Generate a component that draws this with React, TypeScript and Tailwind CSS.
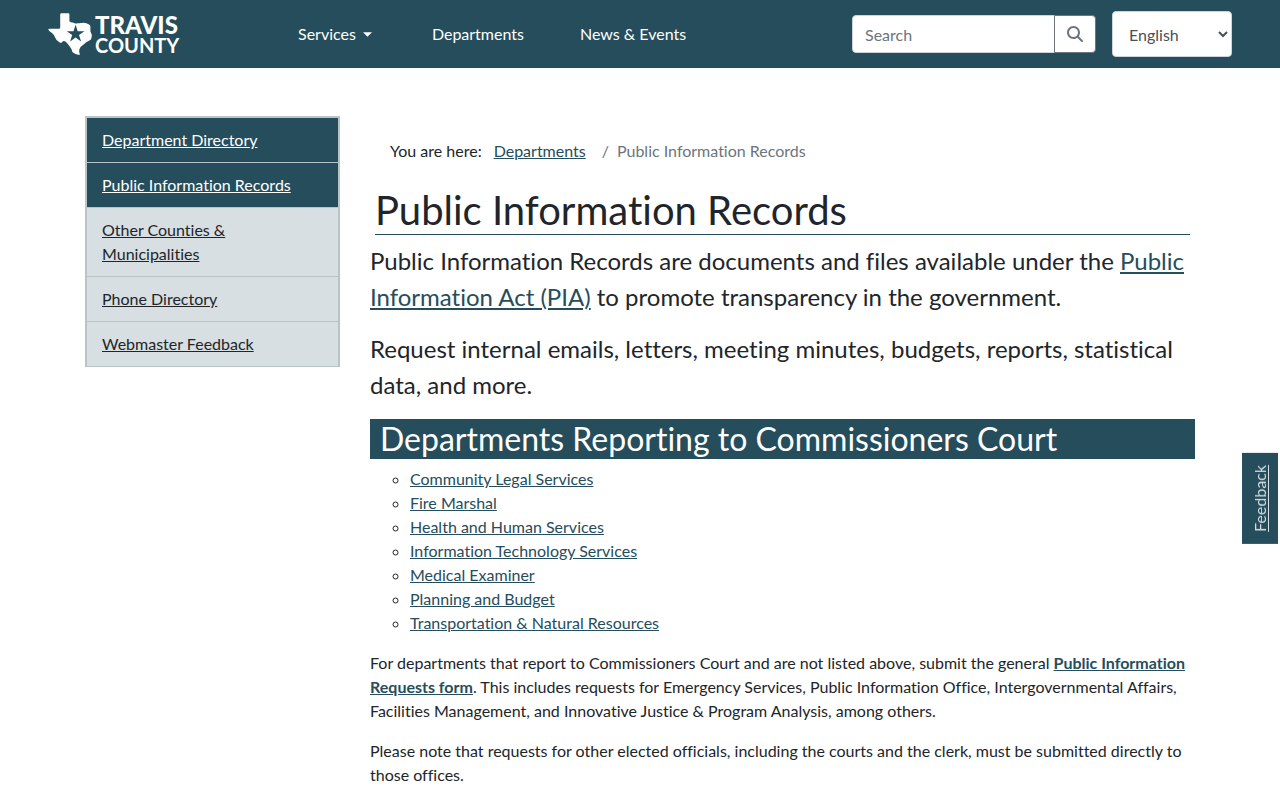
import { useState } from 'react';
import { FaMagnifyingGlass } from 'react-icons/fa6';
import { clsx } from 'clsx';

const sideLinks = [
  { label: 'Department Directory', active: true },
  { label: 'Public Information Records', active: true },
  { label: 'Other Counties & Municipalities', active: false },
  { label: 'Phone Directory', active: false },
  { label: 'Webmaster Feedback', active: false },
];

const departments = [
  'Community Legal Services',
  'Fire Marshal',
  'Health and Human Services',
  'Information Technology Services',
  'Medical Examiner',
  'Planning and Budget',
  'Transportation & Natural Resources',
];

function Logo() {
  return (
    <svg
      width="132"
      height="46"
      viewBox="0 -2 132 46"
      role="img"
      aria-label="Travis County"
      className="overflow-visible"
    >
      <path
        fill="#fff"
        d="M12.2 1.4Q12.2.3 13.3.3H20.3Q21.4.3 21.4 1.4V8.2Q23 9.6 25 9.4Q27 10.8 29.5 10.2Q32.5 10.4 35.5 9.8Q38.5 10.2 41 11.4Q42.4 12 42.4 13.6V18.4Q44.4 21.5 43.6 24.5Q43.3 26.8 41.4 27.6Q38 29 35.6 31.4Q32 33.6 31.3 36.4Q30.8 39 31.9 41.2Q31.6 42.2 30 41.7Q26.6 41.3 24.4 39Q23.6 35.6 21 32.6Q19.2 29.6 17.4 28.4Q15.4 27.4 14.2 29Q13 30.6 11.4 29.2Q8.2 27.8 7.4 25Q6.6 22 4 20Q1 18.2.2 16.6Q.2 15.8 1.4 15.8H11Q12.2 15.8 12.2 14.6Z"
      />
      <path
        fill="#254d5b"
        d="M27.6 11.8L29.7 18.2H36.4L31 22.1L33.1 28.5L27.6 24.5L22.1 28.5L24.2 22.1L18.8 18.2H25.5Z"
      />
      <g fill="#fff" fontFamily="Lato, 'Liberation Sans', sans-serif">
        <text x="47" y="21" fontSize="24" fontWeight="900">TRAVIS</text>
        <text x="47" y="40" fontSize="20" fontWeight="700">COUNTY</text>
      </g>
    </svg>
  );
}

function Header() {
  const [query, setQuery] = useState('');

  return (
    <header className="flex items-center bg-[#254d5b] px-12 py-[11px] text-white">
      <a href="#" className="shrink-0">
        <Logo />
      </a>
      <nav className="ml-[118px] flex items-center gap-14 whitespace-nowrap">
        <button type="button" className="mr-1 flex items-center gap-[7px]">
          Services
          <svg width="9" height="5" viewBox="0 0 9 5" aria-hidden="true">
            <path d="M0 .2H9L4.5 4.8Z" fill="currentColor" />
          </svg>
        </button>
        <a href="#">Departments</a>
        <a href="#">News &amp; Events</a>
      </nav>
      <form className="ml-auto flex" onSubmit={(e) => e.preventDefault()}>
        <input
          type="text"
          aria-label="Search"
          placeholder="Search"
          value={query}
          onChange={(e) => setQuery(e.target.value)}
          className="h-[38px] w-[203px] rounded-l border border-[#ced4da] bg-white px-3 text-[#495057] placeholder:text-[#6c757d]"
        />
        <button
          type="submit"
          aria-label="Submit search"
          className="-ml-px flex h-[38px] w-[42px] items-center justify-center rounded-r border border-[#6c757d] bg-white text-[#6c757d]"
        >
          <FaMagnifyingGlass className="h-4 w-4" />
        </button>
      </form>
      <select
        aria-label="Language"
        className="ml-4 h-[46px] w-[120px] rounded border border-[#ced4da] bg-white px-3 text-[#495057]"
      >
        <option>English</option>
        <option>Español</option>
      </select>
    </header>
  );
}

function Sidebar() {
  return (
    <nav aria-label="Section" className="w-1/4 shrink-0 self-start px-[15px]">
      <ul className="border-x-2 border-t-2 border-[#b8c4c8]">
        {sideLinks.map((link) => (
          <li
            key={link.label}
            className={clsx(
              'border-b border-[#b8c4c8] px-[15px] py-[10px]',
              link.active ? 'bg-[#254d5b] text-white' : 'bg-[#d8dfe2] text-[#212529]'
            )}
          >
            <a href="#" className="underline">
              {link.label}
            </a>
          </li>
        ))}
      </ul>
    </nav>
  );
}

export default function App() {
  return (
    <div className="bg-white font-[Lato,'Liberation_Sans',sans-serif] text-base text-[#212529] [font-variant-ligatures:no-common-ligatures]">
      <Header />

      <div className="mx-auto flex max-w-[1140px] pt-12">
        <Sidebar />

        <main className="min-w-0 flex-1 px-[15px] pt-[23px]">
          {/* Breadcrumb */}
          <nav aria-label="Breadcrumb" className="flex px-5">
            <span className="mr-3">You are here:</span>
            <ol className="flex">
              <li>
                <a href="#" className="text-[#254d5b] underline">Departments</a>
              </li>
              <li className="ml-4 flex gap-2 text-[#6c757d]">
                <span>/</span>
                Public Information Records
              </li>
            </ol>
          </nav>

          <h1 className="mx-[5px] mt-[23px] mb-2 border-b border-[#254d5b] text-[40px] leading-[48px]">
            Public Information Records
          </h1>

          <div className="space-y-4 text-2xl leading-9">
            <p>
              Public Information Records are documents and files available under the{' '}
              <a href="#" className="text-[#254d5b] underline">Public Information Act (PIA)</a> to
              promote transparency in the government.
            </p>
            <p>
              Request internal emails, letters, meeting minutes, budgets, reports, statistical data,
              and more.
            </p>
          </div>

          <h2 className="mt-4 mb-2 bg-[#254d5b] px-[10px] text-[32px] leading-10 text-white">
            Departments Reporting to Commissioners Court
          </h2>

          <ul className="mb-4 list-[circle] pl-10">
            {departments.map((name) => (
              <li key={name}>
                <a href="#" className="text-[#254d5b] underline">{name}</a>
              </li>
            ))}
          </ul>

          <div className="space-y-4">
            <p>
              For departments that report to Commissioners Court and are not listed above, submit the
              general{' '}
              <a href="#" className="font-bold text-[#254d5b] underline">
                Public Information Requests form
              </a>
              . This includes requests for Emergency Services, Public Information Office,
              Intergovernmental Affairs, Facilities Management, and Innovative Justice &amp; Program
              Analysis, among others.
            </p>
            <p>
              Please note that requests for other elected officials, including the courts and the
              clerk, must be submitted directly to those offices.
            </p>
          </div>
        </main>
      </div>

      {/* Feedback tab */}
      <a
        href="#"
        className="fixed top-[453px] right-[2px] rotate-180 bg-[#254d5b] px-3 py-[6px] text-[#d8dfe2] underline [writing-mode:vertical-rl]"
      >
        Feedback
      </a>
    </div>
  );
}
